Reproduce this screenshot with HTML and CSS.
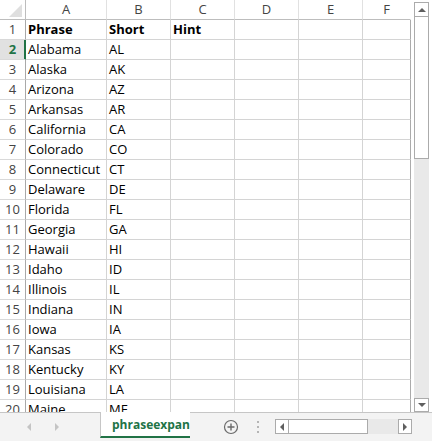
FILE: index.html
```html
<!DOCTYPE html>
<html>
<head>
<meta charset="utf-8">
<link rel="stylesheet" href="styles.css">
</head>
<body>
<div class="app">
  <div class="main">
    <div class="sheet">
      <div class="row">
        <div class="corner"><svg width="25" height="19" viewBox="0 0 25 19"><polygon points="9,17 22,17 22,4" fill="#dfdfdf"/></svg></div>
        <div class="ch">A</div><div class="ch">B</div><div class="ch">C</div><div class="ch">D</div><div class="ch">E</div><div class="ch last">F</div>
      </div>
      <div class="row"><div class="rh">1</div><div class="c b">Phrase</div><div class="c b">Short</div><div class="c b">Hint</div><div class="c"></div><div class="c"></div><div class="c last"></div></div>
      <div class="row"><div class="rh sel">2</div><div class="c">Alabama</div><div class="c">AL</div><div class="c"></div><div class="c"></div><div class="c"></div><div class="c last"></div></div>
      <div class="row"><div class="rh">3</div><div class="c">Alaska</div><div class="c">AK</div><div class="c"></div><div class="c"></div><div class="c"></div><div class="c last"></div></div>
      <div class="row"><div class="rh">4</div><div class="c">Arizona</div><div class="c">AZ</div><div class="c"></div><div class="c"></div><div class="c"></div><div class="c last"></div></div>
      <div class="row"><div class="rh">5</div><div class="c">Arkansas</div><div class="c">AR</div><div class="c"></div><div class="c"></div><div class="c"></div><div class="c last"></div></div>
      <div class="row"><div class="rh">6</div><div class="c">California</div><div class="c">CA</div><div class="c"></div><div class="c"></div><div class="c"></div><div class="c last"></div></div>
      <div class="row"><div class="rh">7</div><div class="c">Colorado</div><div class="c">CO</div><div class="c"></div><div class="c"></div><div class="c"></div><div class="c last"></div></div>
      <div class="row"><div class="rh">8</div><div class="c">Connecticut</div><div class="c">CT</div><div class="c"></div><div class="c"></div><div class="c"></div><div class="c last"></div></div>
      <div class="row"><div class="rh">9</div><div class="c">Delaware</div><div class="c">DE</div><div class="c"></div><div class="c"></div><div class="c"></div><div class="c last"></div></div>
      <div class="row"><div class="rh">10</div><div class="c">Florida</div><div class="c">FL</div><div class="c"></div><div class="c"></div><div class="c"></div><div class="c last"></div></div>
      <div class="row"><div class="rh">11</div><div class="c">Georgia</div><div class="c">GA</div><div class="c"></div><div class="c"></div><div class="c"></div><div class="c last"></div></div>
      <div class="row"><div class="rh">12</div><div class="c">Hawaii</div><div class="c">HI</div><div class="c"></div><div class="c"></div><div class="c"></div><div class="c last"></div></div>
      <div class="row"><div class="rh">13</div><div class="c">Idaho</div><div class="c">ID</div><div class="c"></div><div class="c"></div><div class="c"></div><div class="c last"></div></div>
      <div class="row"><div class="rh">14</div><div class="c">Illinois</div><div class="c">IL</div><div class="c"></div><div class="c"></div><div class="c"></div><div class="c last"></div></div>
      <div class="row"><div class="rh">15</div><div class="c">Indiana</div><div class="c">IN</div><div class="c"></div><div class="c"></div><div class="c"></div><div class="c last"></div></div>
      <div class="row"><div class="rh">16</div><div class="c">Iowa</div><div class="c">IA</div><div class="c"></div><div class="c"></div><div class="c"></div><div class="c last"></div></div>
      <div class="row"><div class="rh">17</div><div class="c">Kansas</div><div class="c">KS</div><div class="c"></div><div class="c"></div><div class="c"></div><div class="c last"></div></div>
      <div class="row"><div class="rh">18</div><div class="c">Kentucky</div><div class="c">KY</div><div class="c"></div><div class="c"></div><div class="c"></div><div class="c last"></div></div>
      <div class="row"><div class="rh">19</div><div class="c">Louisiana</div><div class="c">LA</div><div class="c"></div><div class="c"></div><div class="c"></div><div class="c last"></div></div>
      <div class="row"><div class="rh">20</div><div class="c">Maine</div><div class="c">ME</div><div class="c"></div><div class="c"></div><div class="c"></div><div class="c last"></div></div>
    </div>
    <div class="vscroll">
      <div class="vbtn"><span class="tri-up"></span></div>
      <div class="vthumb"></div>
      <div class="vtrack"></div>
      <div class="vbtn down"><span class="tri-down"></span></div>
    </div>
  </div>
  <div class="tabbar">
    <div class="nav">
      <span class="nav-left"></span>
      <span class="nav-right"></span>
    </div>
    <div class="tab">phraseexpan</div>
    <div class="add"><svg width="16" height="16" viewBox="0 0 16 16"><circle cx="8" cy="8" r="6.5" fill="none" stroke="#6a6a6a" stroke-width="1.2"/><path d="M8 4.5V11.5M4.5 8H11.5" stroke="#6a6a6a" stroke-width="1.4"/></svg></div>
    <div class="dots"><span></span><span></span><span></span></div>
    <div class="hscroll">
      <div class="hbtn"><span class="tri-left"></span></div>
      <div class="hthumb"></div>
      <div class="htrack"></div>
      <div class="hbtn"><span class="tri-right"></span></div>
    </div>
  </div>
</div>
</body>
</html>
```
FILE: styles.css
```css
html, body {
  margin: 0;
  padding: 0;
  background: #ffffff;
}
body {
  font-family: "Open Sans", "Noto Sans", sans-serif;
  font-size: 13px;
  color: #000;
}
.app {
  width: 432px;
  height: 441px;
  overflow: hidden;
  display: flex;
  flex-direction: column;
}
.main {
  display: flex;
  height: 412px;
  overflow: hidden;
}
.sheet {
  width: 411px;
  height: 412px;
  overflow: hidden;
  flex: none;
}
.row {
  display: grid;
  grid-template-columns: 26px 81px 64px 64px 64px 64px 48px;
  height: 20px;
}
.row > div {
  box-sizing: border-box;
  height: 20px;
  line-height: 19px;
  white-space: nowrap;
  overflow: hidden;
}
.corner {
  border-right: 1px solid #bdbdbd;
  border-bottom: 1px solid #bdbdbd;
}
.corner svg {
  display: block;
}
.ch {
  text-align: center;
  color: #444;
  border-right: 1px solid #e1e1e1;
  border-bottom: 1px solid #bdbdbd;
}
.ch.last {
  border-right-color: #fff;
}
.rh {
  text-align: center;
  color: #444;
  border-right: 1px solid #a9a9a9;
  border-bottom: 1px solid #d9d9d9;
}
.rh.sel {
  background: #e1e1e1;
  color: #217346;
  font-weight: bold;
  border-right-color: #217346;
  box-shadow: inset -1px 0 0 #217346;
}
.c {
  padding-left: 2px;
  border-right: 1px solid #d4d4d4;
  border-bottom: 1px solid #d4d4d4;
}
.c.last {
  border-right-color: #ababab;
}
.b {
  font-weight: bold;
}
.vscroll {
  width: 21px;
  flex: none;
  display: flex;
  flex-direction: column;
  padding: 2px 0 0 3px;
  box-sizing: border-box;
  height: 412px;
}
.vbtn {
  width: 15px;
  height: 15px;
  box-sizing: border-box;
  border: 1px solid #ababab;
  background: #fff;
  display: flex;
  align-items: center;
  justify-content: center;
  flex: none;
}
.vbtn.down {
  height: 14px;
}
.vthumb {
  width: 15px;
  height: 142px;
  box-sizing: border-box;
  border: 1px solid #ababab;
  border-top: none;
  background: #fff;
  flex: none;
}
.vtrack {
  width: 15px;
  flex: 1;
  background: #e9e9e9;
}
.tri-up {
  width: 0;
  height: 0;
  border-left: 4px solid transparent;
  border-right: 4px solid transparent;
  border-bottom: 4px solid #5f5f5f;
}
.tri-down {
  width: 0;
  height: 0;
  border-left: 4px solid transparent;
  border-right: 4px solid transparent;
  border-top: 4px solid #5f5f5f;
}
.tabbar {
  flex: 1;
  background: #f3f3f3;
  border-top: 1px solid #c6c6c6;
  display: flex;
  align-items: flex-start;
}
.nav {
  width: 100px;
  flex: none;
  display: flex;
  align-items: center;
  height: 28px;
  padding-left: 27px;
  box-sizing: border-box;
}
.nav-left {
  width: 0;
  height: 0;
  border-top: 4px solid transparent;
  border-bottom: 4px solid transparent;
  border-right: 4px solid #c4c4c4;
}
.nav-right {
  width: 0;
  height: 0;
  margin-left: 24px;
  border-top: 4px solid transparent;
  border-bottom: 4px solid transparent;
  border-left: 4px solid #c4c4c4;
}
.tab {
  width: 90px;
  flex: none;
  height: 26px;
  margin-top: -1px;
  box-sizing: border-box;
  background: #fff;
  border-left: 1px solid #c6c6c6;
  border-bottom: 2px solid #217346;
  padding: 2px 0 0 11px;
  line-height: 22px;
  font-size: 12px;
  font-weight: bold;
  color: #217346;
  white-space: nowrap;
  overflow: hidden;
}
.add {
  margin: 6px 0 0 33px;
  width: 16px;
  height: 16px;
  flex: none;
}
.add svg {
  display: block;
}
.dots {
  margin: 8px 0 0 18px;
  display: flex;
  flex-direction: column;
  gap: 3px;
  flex: none;
}
.dots span {
  width: 2px;
  height: 2px;
  background: #b5b5b5;
}
.hscroll {
  margin: 6px 0 0 16px;
  display: flex;
  height: 15px;
  flex: none;
}
.hbtn {
  width: 14px;
  height: 15px;
  box-sizing: border-box;
  border: 1px solid #ababab;
  background: #fff;
  display: flex;
  align-items: center;
  justify-content: center;
}
.hthumb {
  width: 79px;
  height: 15px;
  box-sizing: border-box;
  border: 1px solid #ababab;
  border-left: none;
  background: #fff;
}
.htrack {
  width: 30px;
  height: 15px;
  background: #e9e9e9;
}
.tri-left {
  width: 0;
  height: 0;
  border-top: 4px solid transparent;
  border-bottom: 4px solid transparent;
  border-right: 4px solid #5f5f5f;
}
.tri-right {
  width: 0;
  height: 0;
  border-top: 4px solid transparent;
  border-bottom: 4px solid transparent;
  border-left: 4px solid #5f5f5f;
}
```
